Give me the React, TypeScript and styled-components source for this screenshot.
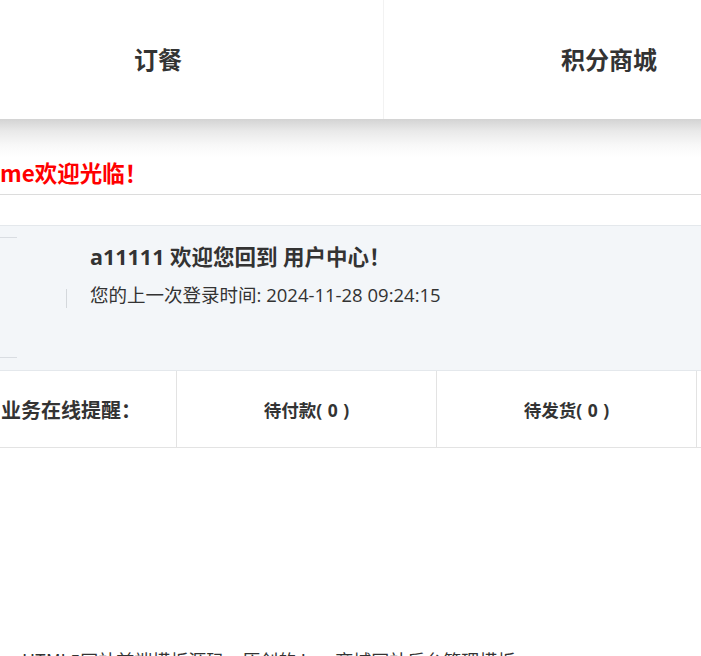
import React from "react";
import styled, { createGlobalStyle } from "styled-components";

const Global = createGlobalStyle`
  html, body { margin: 0; padding: 0; background: #fff; }
  body {
    width: 701px;
    overflow: hidden;
    font-family: "Open Sans", "Noto Sans CJK SC", sans-serif;
    color: #333;
  }
`;

const Page = styled.div`
  width: 701px;
  height: 656px;
  overflow: hidden;
`;

const Nav = styled.nav`
  display: flex;
  height: 119px;
  margin-left: -67px;
  background: #fff;
`;

const NavItem = styled.a<{ $divider?: boolean }>`
  flex: 0 0 ${(p) => (p.$divider ? "451px" : "450px")};
  display: flex;
  align-items: center;
  justify-content: center;
  padding-bottom: 2px;
  box-sizing: border-box;
  font-family: "Noto Sans CJK SC", sans-serif;
  font-size: 24px;
  font-weight: 700;
  color: #333;
  text-decoration: none;
  border-right: ${(p) => (p.$divider ? "1px solid #f2f2f2" : "none")};
`;

const WelcomeStrip = styled.div`
  height: 75px;
  display: flex;
  align-items: flex-end;
  background: linear-gradient(#d3d3d3 0px, #e9e9e9 12px, #f8f8f8 26px, #fff 38px);
  border-bottom: 1px solid #dcdcdc;
  overflow: hidden;
`;

const WelcomeText = styled.div`
  font-family: "Noto Sans CJK SC", sans-serif;
  font-size: 22.5px;
  font-weight: 700;
  color: #f00;
  line-height: 30px;
  margin-bottom: 7px;
  margin-left: -66px;
  white-space: nowrap;
`;

const Panel = styled.section`
  margin-top: 30px;
  height: 144px;
  background: #f3f6f9;
  border-top: 1px solid #e4e8ec;
  border-bottom: 1px solid #e4e8ec;
  display: flex;
  align-items: flex-start;
`;

const AvatarEdge = styled.div`
  flex: 0 0 17px;
  height: 119px;
  margin-top: 11px;
  border-top: 1px solid #d9dde2;
  border-bottom: 1px solid #d9dde2;
`;

const Tick = styled.div`
  flex: 0 0 1px;
  height: 19px;
  margin-top: 63px;
  margin-left: 49px;
  background: #d4d8dc;
`;

const Info = styled.div`
  margin-left: 23px;
  padding-top: 15px;
  display: flex;
  flex-direction: column;
  gap: 10px;
`;

const Greeting = styled.div`
  font-family: "Open Sans", "Noto Sans CJK SC", sans-serif;
  font-size: 21.5px;
  font-weight: 700;
  line-height: 31px;
  color: #333;
  white-space: nowrap;
`;

const LastLogin = styled.div`
  font-family: "Open Sans", "Noto Sans CJK SC", sans-serif;
  font-size: 18.5px;
  line-height: 26px;
  color: #333;
  white-space: nowrap;
`;

const Reminders = styled.div`
  display: flex;
  height: 76px;
  border-bottom: 1px solid #e3e3e3;
`;

const ReminderLabel = styled.div`
  flex: 0 0 177px;
  display: flex;
  align-items: center;
  justify-content: flex-end;
  padding-right: 35px;
  box-sizing: border-box;
  border-right: 1px solid #e3e3e3;
  font-family: "Noto Sans CJK SC", sans-serif;
  font-size: 20px;
  font-weight: 700;
  white-space: nowrap;
  overflow: hidden;
`;

const ReminderCell = styled.div`
  flex: 0 0 259px;
  display: flex;
  align-items: center;
  justify-content: center;
  border-right: 1px solid #e3e3e3;
  font-family: "Open Sans", "Noto Sans CJK SC", sans-serif;
  font-size: 17.5px;
  font-weight: 700;
  word-spacing: 1px;
  white-space: nowrap;
`;

const Footer = styled.div`
  margin-top: 200px;
  padding-left: 22px;
  font-family: "Noto Sans CJK SC", sans-serif;
  font-size: 18px;
  line-height: 24px;
  color: #333;
  white-space: nowrap;
`;

export default function App() {
  return (
    <Page>
      <Global />
      <Nav>
        <NavItem href="#" $divider>订餐</NavItem>
        <NavItem href="#">积分商城</NavItem>
      </Nav>
      <WelcomeStrip>
        <WelcomeText>Welcome欢迎光临！</WelcomeText>
      </WelcomeStrip>
      <Panel>
        <AvatarEdge />
        <Tick />
        <Info>
          <Greeting>a11111 欢迎您回到 用户中心！</Greeting>
          <LastLogin>您的上一次登录时间: 2024-11-28 09:24:15</LastLogin>
        </Info>
      </Panel>
      <Reminders>
        <ReminderLabel>业务在线提醒：</ReminderLabel>
        <ReminderCell>待付款( 0 )</ReminderCell>
        <ReminderCell>待发货( 0 )</ReminderCell>
        <ReminderCell>待收货( 0 )</ReminderCell>
      </Reminders>
      <Footer>HTML5网站前端模板源码，原创的Java商城网站后台管理模板</Footer>
    </Page>
  );
}
